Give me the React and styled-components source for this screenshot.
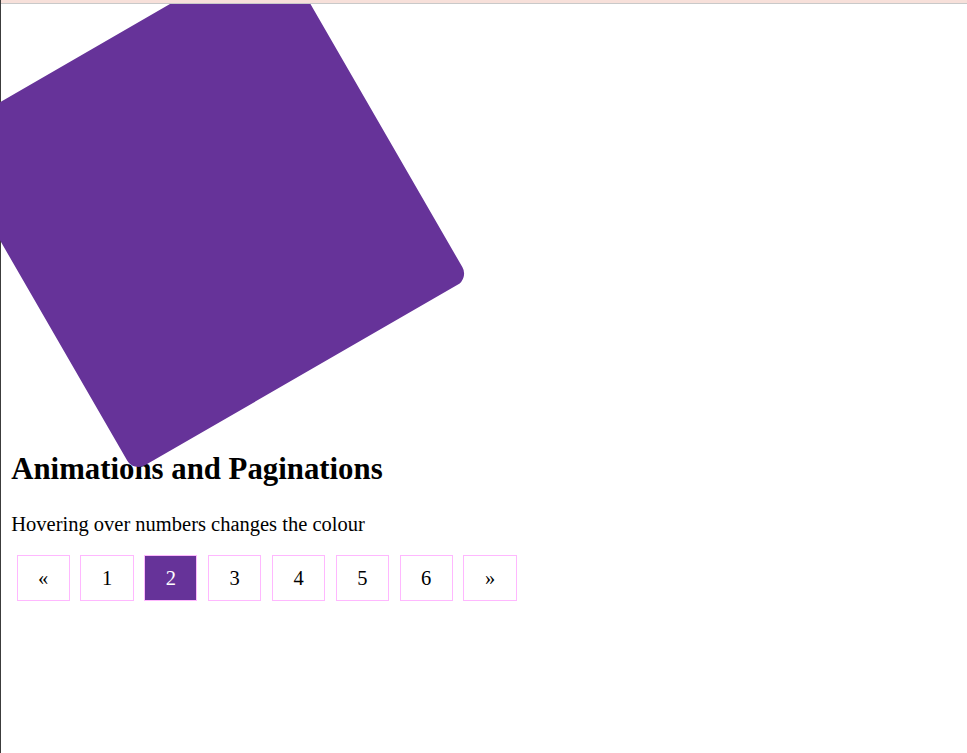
import React from 'react';
import styled, { createGlobalStyle } from 'styled-components';

const GlobalStyle = createGlobalStyle`
  html, body { margin: 0; padding: 0; background: #fff; }
  body { font-family: "Liberation Serif", "Times New Roman", serif; color: #000; }
`;

const PURPLE = '#663399';

const Frame = styled.div`
  min-height: 100vh;
  border-left: 1px solid #3c3c3c;
  box-sizing: border-box;
`;

// sits above the rotated square, which would otherwise paint over it
const TopBar = styled.div`
  position: relative;
  z-index: 1;
  height: 3px;
  background: #f7e0da;
  border-bottom: 1px solid #c9c9c9;
`;

const Content = styled.div`
  padding: 10.25px;
`;

// margin-bottom collapses with the heading's top margin
const Square = styled.div`
  width: 387px;
  height: 387px;
  margin-bottom: 51px;
  background: ${PURPLE};
  border-radius: 13px;
  transform: rotate(-30deg);
`;

const Title = styled.h2`
  font-size: 30.8px;
  font-weight: 700;
  margin: 25.6px 0;
`;

const Lead = styled.p`
  font-size: 20.5px;
  margin: 20.5px 0 19.5px;
`;

const Pagination = styled.div`
  display: flex;
`;

const PageLink = styled.a`
  display: block;
  padding: 10.25px 20.5px;
  margin: 0 5.3px;
  font-size: 20.5px;
  border: 1px solid #ffb8ff;
  color: ${p => (p.$active ? '#fff' : '#000')};
  background: ${p => (p.$active ? PURPLE : 'transparent')};
  text-decoration: none;
  cursor: pointer;
  transition: background-color 0.3s;
  &:hover { background: ${p => (p.$active ? PURPLE : '#ddd')}; }
`;

const pages = ['«', '1', '2', '3', '4', '5', '6', '»'];

export default function App() {
  return (
    <Frame>
      <GlobalStyle />
      <TopBar />
      <Content>
        <Square />
        <Title>Animations and Paginations</Title>
        <Lead>Hovering over numbers changes the colour</Lead>
        <Pagination>
          {pages.map(p => (
            <PageLink key={p} $active={p === '2'}>{p}</PageLink>
          ))}
        </Pagination>
      </Content>
    </Frame>
  );
}
